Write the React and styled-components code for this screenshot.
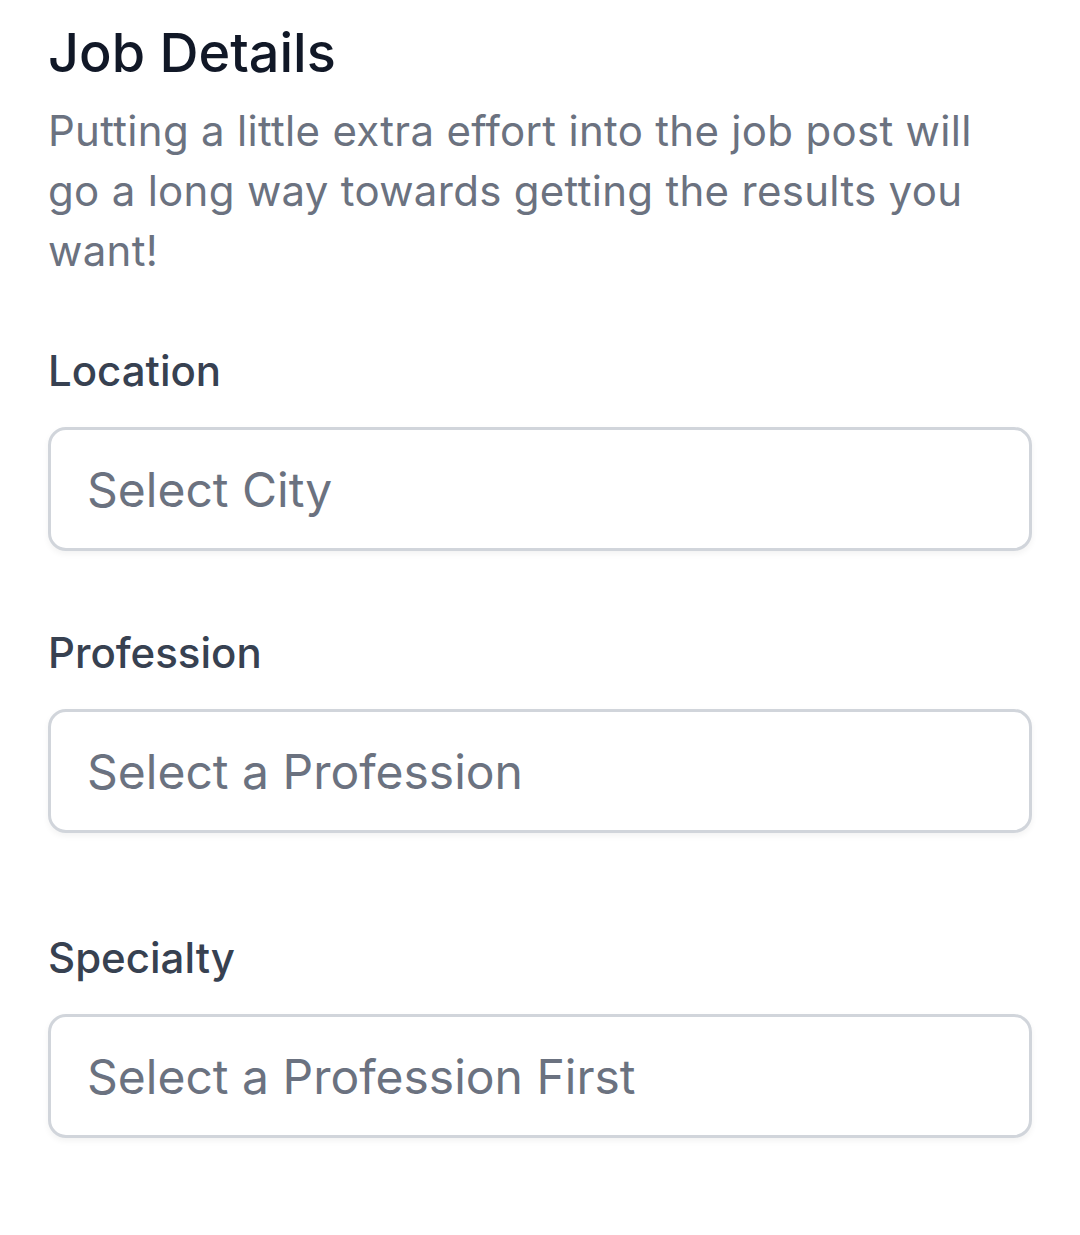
import React from "react";
import styled, { createGlobalStyle } from "styled-components";

const Global = createGlobalStyle`
  html, body { margin: 0; padding: 0; background: #ffffff; }
  body { font-family: Inter, "Noto Sans", sans-serif; -webkit-font-smoothing: antialiased; }
  * { box-sizing: border-box; }
`;

const Page = styled.div`
  padding: 11px 48px 48px;
  width: 1080px;
`;

const Header = styled.header`
  display: flex;
  flex-direction: column;
  gap: 6px;
`;

const Title = styled.h2`
  margin: 0;
  font-size: 54px;
  line-height: 84px;
  font-weight: 500;
  color: #111827;
`;

const Description = styled.p`
  margin: 0;
  font-size: 42px;
  line-height: 60px;
  font-weight: 400;
  letter-spacing: 0.3px;
  color: #6b7280;
`;

const Form = styled.div`
  display: flex;
  flex-direction: column;
  margin-top: 60px;
`;

const Field = styled.div`
  display: flex;
  flex-direction: column;
  gap: 26px;
  margin-top: ${(p) => p.$gap || 0}px;
`;

const Label = styled.label`
  font-size: 42px;
  line-height: 60px;
  font-weight: 500;
  color: #374151;
`;

const Input = styled.input`
  width: 984px;
  height: 124px;
  padding: 0 36px;
  border: 3px solid #d1d5db;
  border-radius: 18px;
  box-shadow: 0 3px 6px rgba(0, 0, 0, 0.05);
  font-family: Inter, "Noto Sans", sans-serif;
  font-size: 48px;
  color: #111827;
  background: #ffffff;
  outline: none;
  &::placeholder { color: #6b7280; opacity: 1; }
`;

const fields = [
  { id: "location", label: "Location", placeholder: "Select City", gap: 0 },
  { id: "profession", label: "Profession", placeholder: "Select a Profession", gap: 72 },
  { id: "specialty", label: "Specialty", placeholder: "Select a Profession First", gap: 95 },
];

export default function App() {
  return (
    <Page>
      <Global />
      <Header>
        <Title>Job Details</Title>
        <Description>
          Putting a little extra effort into the job post will go a long way towards getting the results you want!
        </Description>
      </Header>
      <Form>
        {fields.map((f) => (
          <Field key={f.id} $gap={f.gap}>
            <Label htmlFor={f.id}>{f.label}</Label>
            <Input id={f.id} placeholder={f.placeholder} readOnly />
          </Field>
        ))}
      </Form>
    </Page>
  );
}
